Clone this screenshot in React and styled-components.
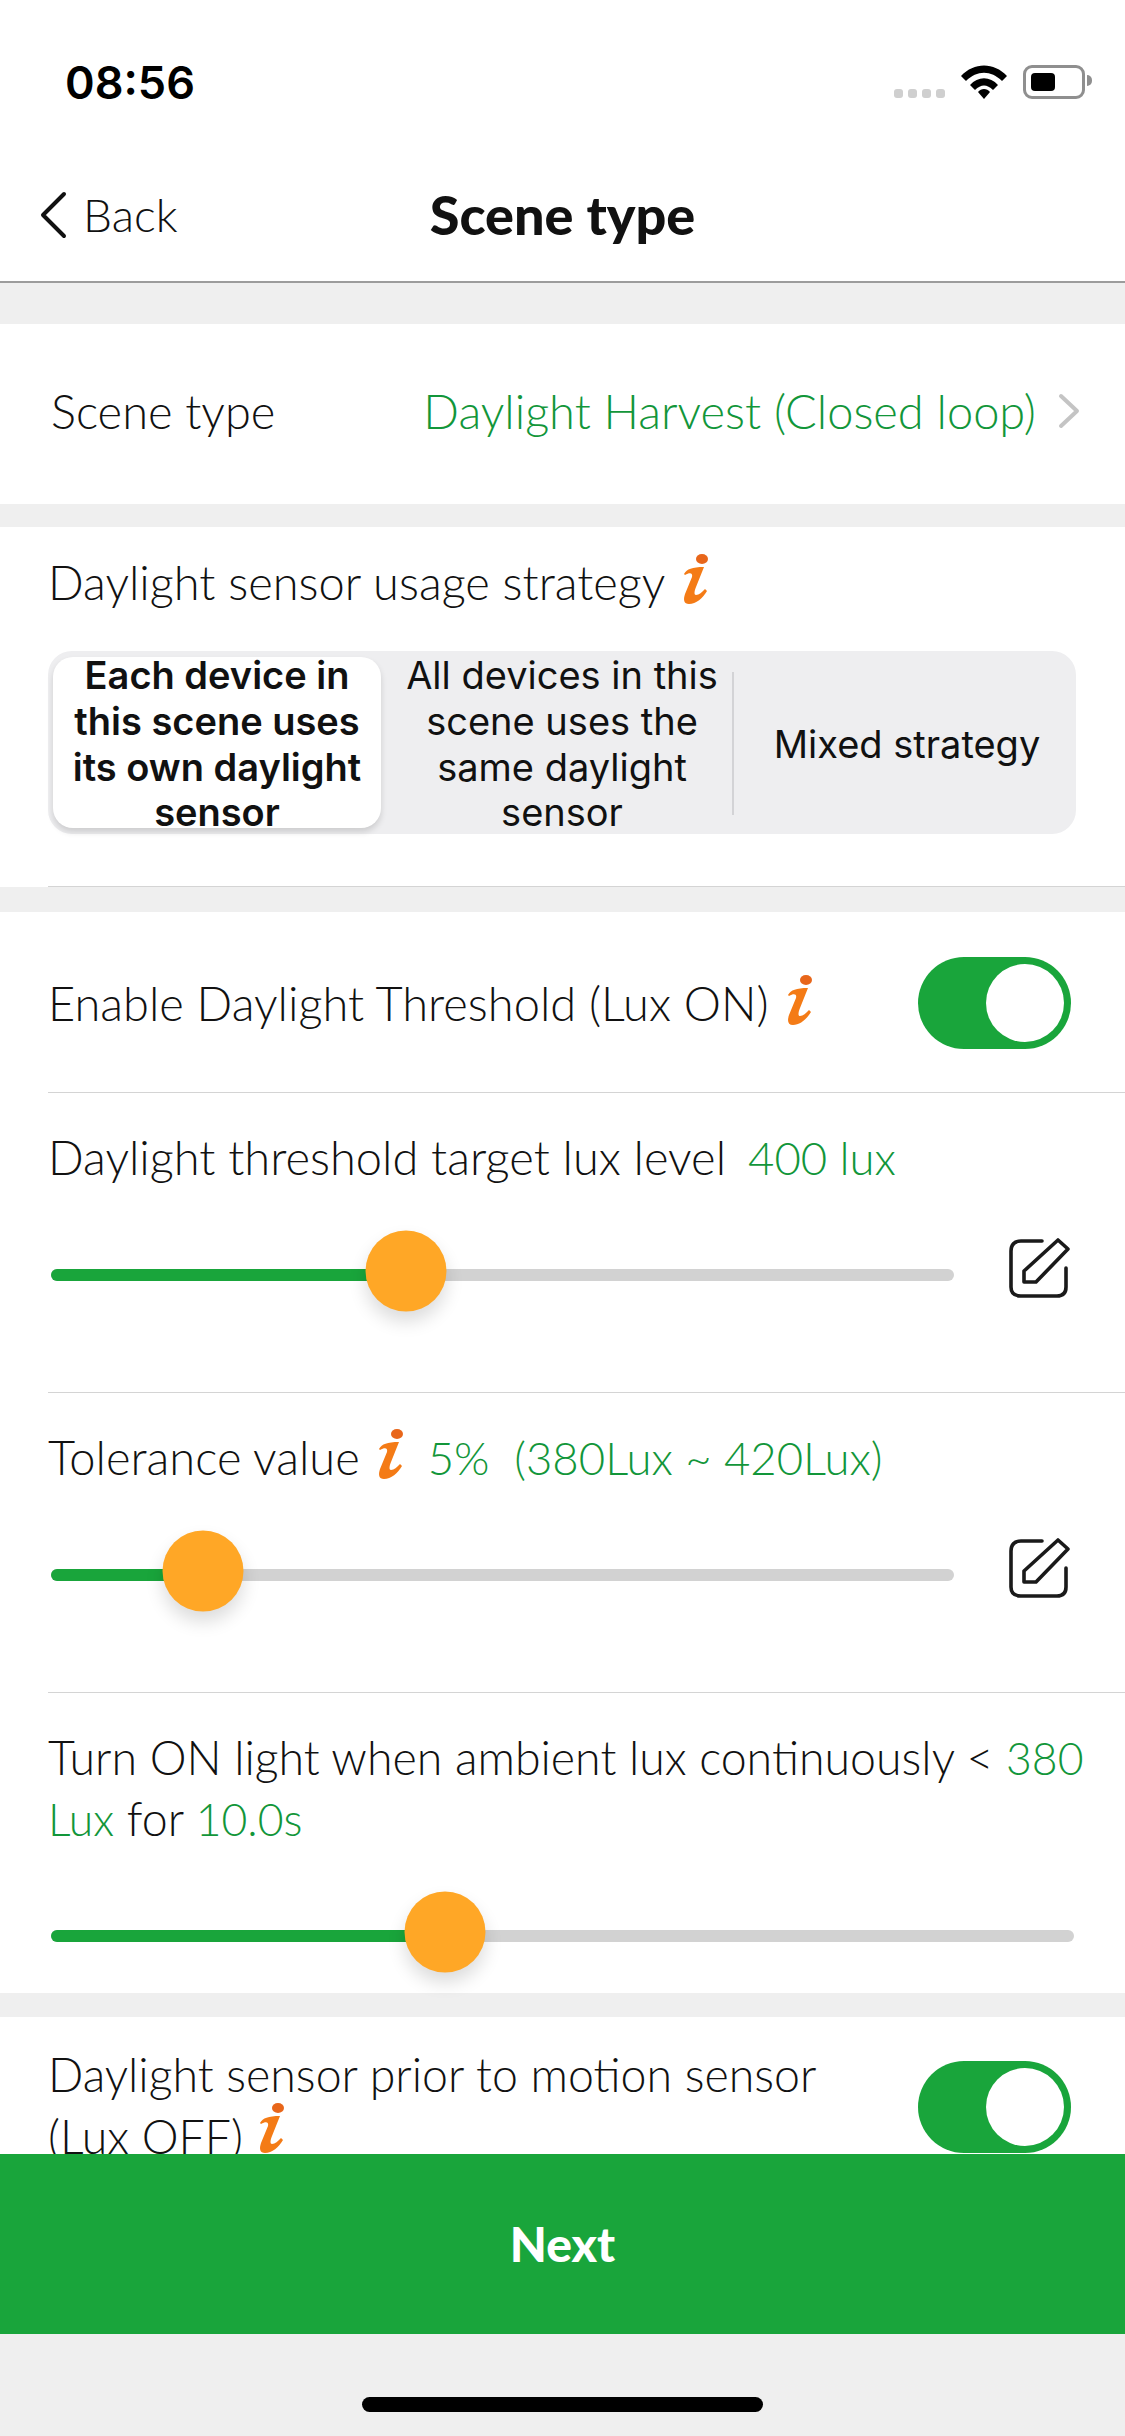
import React from "react";
import styled, { createGlobalStyle } from "styled-components";

const GREEN = "#19a53b";
const GREEN_TEXT = "#12963a";
const BODY_FONT = `"Lato", "Liberation Sans", sans-serif`;

const GlobalStyle = createGlobalStyle`
  html, body {
    margin: 0;
    padding: 0;
    background: #fff;
  }
  * {
    box-sizing: border-box;
  }
`;

const InfoIcon = () => (
  <InfoSvg viewBox="0 0 26 50">
    <ellipse cx="19" cy="5" rx="6" ry="5" fill="#e8661a" />
    <path
      d="M1 20 C4 15 9 13 21 13 L13 33 C11 38 11 41 13 41 C16 41 19 38 22 35 L24 37 C20 44 13 50 6 50 C1 50 0 46 2 40 L9 23 C10 19 7 18 2 21 Z"
      fill="#f47b16"
    />
  </InfoSvg>
);

const EditIcon = () => (
  <EditSvg viewBox="0 0 62 62" fill="none" stroke="#1a1a1a" strokeWidth="3.6" strokeLinejoin="round" strokeLinecap="round">
    <path d="M34 3 H13 C6 3 3 7 3 13 V49 C3 55 6 58 13 58 H49 C55 58 58 55 58 49 V30" />
    <path d="M50 2 L60 11 L28 44 H16 V33 Z" />
  </EditSvg>
);

const Slider = ({ value, width }) => (
  <Track $width={width}>
    <Fill style={{ width: `${value}%` }} />
    <Thumb style={{ left: `${value}%` }} />
  </Track>
);

const App = () => (
  <Page>
    <GlobalStyle />
    <Header>
      <StatusBar>
        <Time>08:56</Time>
        <StatusIcons>
          <Signal>
            <Dot />
            <Dot />
            <Dot />
            <Dot />
          </Signal>
          <svg width="46" height="34" viewBox="0 0 46 34">
            <path d="M0 11 C13 -3 33 -3 46 11 L41 16 C30 5 16 5 5 16 Z" fill="#000" />
            <path d="M9 20 C17 11 29 11 37 20 L32 25 C26 19 20 19 14 25 Z" fill="#000" />
            <path d="M17 27 C20 23 26 23 29 27 L23 34 Z" fill="#000" />
          </svg>
          <Battery>
            <BatteryLevel />
          </Battery>
        </StatusIcons>
      </StatusBar>
      <NavBar>
        <BackButton>
          <svg width="30" height="48" viewBox="0 0 30 48" fill="none" stroke="#111" strokeWidth="4" strokeLinecap="round" strokeLinejoin="round">
            <path d="M26 3 L5 24 L26 45" />
          </svg>
          <BackLabel>Back</BackLabel>
        </BackButton>
        <NavTitle>Scene type</NavTitle>
      </NavBar>
    </Header>

    <Content>
      <Gap $h={41} />
      <SceneRow>
        <RowLabel>Scene type</RowLabel>
        <SceneValue>
          <Green>Daylight Harvest (Closed loop)</Green>
          <svg width="22" height="36" viewBox="0 0 22 36" fill="none" stroke="#c4c4c4" strokeWidth="4" strokeLinecap="round" strokeLinejoin="round">
            <path d="M3 3 L19 18 L3 33" />
          </svg>
        </SceneValue>
      </SceneRow>
      <Gap $h={23} />

      <StrategyBlock>
        <TitleLine>
          Daylight sensor usage strategy
          <InfoIcon />
        </TitleLine>
        <Segmented>
          <Segment $active>
            Each device in
            <br />
            this scene uses
            <br />
            its own daylight
            <br />
            sensor
          </Segment>
          <Segment>
            All devices in this
            <br />
            scene uses the
            <br />
            same daylight
            <br />
            sensor
          </Segment>
          <SegmentDivider />
          <Segment>Mixed strategy</Segment>
        </Segmented>
      </StrategyBlock>
      <Gap $h={25} />

      <ToggleRow>
        <TitleLine>
          Enable Daylight Threshold (Lux ON)
          <InfoIcon />
        </TitleLine>
        <Toggle />
      </ToggleRow>

      <SliderBlock>
        <TitleLine $gap={22}>
          Daylight threshold target lux level
          <Green>400 lux</Green>
        </TitleLine>
        <SliderRow>
          <Slider value={39.3} width={903} />
          <EditIcon />
        </SliderRow>
      </SliderBlock>

      <SliderBlock>
        <TitleLine>
          Tolerance value
          <InfoIcon />
          <ToleranceValue>5%&nbsp; (380Lux ~ 420Lux)</ToleranceValue>
        </TitleLine>
        <SliderRow>
          <Slider value={16.8} width={903} />
          <EditIcon />
        </SliderRow>
      </SliderBlock>

      <TurnOnBlock>
        <Paragraph>
          Turn ON light when ambient lux continuously &lt;{" "}
          <Green>
            380
            <br />
            Lux
          </Green>{" "}
          for <Green>10.0s</Green>
        </Paragraph>
        <SliderRow $last>
          <Slider value={38.5} width={1023} />
        </SliderRow>
      </TurnOnBlock>
      <Gap $h={24} />

      <LastRow>
        <Paragraph>
          Daylight sensor prior to motion sensor
          <br />
          (Lux OFF) <InfoIcon />
        </Paragraph>
        <Toggle />
      </LastRow>
    </Content>

    <NextButton>Next</NextButton>
    <BottomArea>
      <HomeIndicator />
    </BottomArea>
  </Page>
);

export default App;

const Page = styled.div`
  display: flex;
  flex-direction: column;
  width: 1125px;
  height: 2436px;
  overflow: hidden;
  font-family: ${BODY_FONT};
  font-weight: 300;
  color: #111;
  background: #fff;
`;

const Header = styled.header`
  flex: none;
  height: 283px;
  background: #fff;
  border-bottom: 2px solid #9c9c9c;
`;

const StatusBar = styled.div`
  display: flex;
  align-items: flex-start;
  justify-content: space-between;
  height: 148px;
  padding: 59px 40px 0 65px;
`;

const Time = styled.div`
  font-family: "Inter", "Liberation Sans", sans-serif;
  font-size: 45px;
  line-height: 48px;
  font-weight: 600;
  color: #000;
`;

const StatusIcons = styled.div`
  display: flex;
  align-items: flex-start;
  gap: 16px;
  padding-top: 6px;
`;

const Signal = styled.div`
  display: flex;
  gap: 5px;
  margin-top: 24px;
`;

const Dot = styled.span`
  width: 9px;
  height: 9px;
  border-radius: 3px;
  background: #cfcfcf;
`;

const Battery = styled.div`
  position: relative;
  width: 62px;
  height: 34px;
  padding: 5px;
  border: 3px solid #8f8f8f;
  border-radius: 9px;

  &::after {
    content: "";
    position: absolute;
    top: 7px;
    right: -10px;
    width: 5px;
    height: 11px;
    border-radius: 0 6px 6px 0;
    background: #8f8f8f;
  }
`;

const BatteryLevel = styled.div`
  width: 24px;
  height: 100%;
  border-radius: 4px;
  background: #000;
`;

const NavBar = styled.nav`
  position: relative;
  display: flex;
  align-items: center;
  height: 133px;
  padding-left: 38px;
`;

const BackButton = styled.div`
  display: flex;
  align-items: center;
  gap: 15px;
`;

const BackLabel = styled.span`
  font-size: 46px;
  font-weight: 300;
  color: #111;
`;

const NavTitle = styled.h1`
  position: absolute;
  left: 0;
  right: 0;
  margin: 0;
  text-align: center;
  font-size: 54px;
  font-weight: 900;
  color: #111;
`;

const Content = styled.main`
  flex: 1;
  min-height: 0;
  overflow: hidden;
  background: #fff;
`;

const Gap = styled.div`
  height: ${(p) => p.$h}px;
  background: #efefef;
`;

const SceneRow = styled.div`
  display: flex;
  align-items: center;
  justify-content: space-between;
  height: 180px;
  padding: 0 45px 6px 51px;
`;

const RowLabel = styled.span`
  font-size: 47px;
`;

const SceneValue = styled.div`
  display: flex;
  align-items: center;
  gap: 22px;
  font-size: 47px;
`;

const Green = styled.span`
  color: ${GREEN_TEXT};
`;

const ToleranceValue = styled(Green)`
  margin-left: 6px;
`;

const TitleLine = styled.div`
  display: flex;
  align-items: center;
  gap: ${(p) => p.$gap || 18}px;
  height: 70px;
  font-size: 47px;

  ${Green} {
    font-size: 45.5px;
  }
`;

const InfoSvg = styled.svg`
  display: inline-block;
  flex: none;
  width: 26px;
  height: 50px;
  margin-bottom: 6px;
  vertical-align: -6px;
`;

const EditSvg = styled.svg`
  flex: none;
  width: 62px;
  height: 62px;
  margin-left: 54px;
  margin-top: -12px;
`;

const StrategyBlock = styled.section`
  position: relative;
  height: 360px;
  padding: 20px 48px 0;

  &::after {
    content: "";
    position: absolute;
    left: 48px;
    right: 0;
    bottom: 0;
    height: 1.5px;
    background: #d4d4d4;
  }
`;

const Segmented = styled.div`
  display: grid;
  grid-template-columns: 328px 362px 1fr;
  grid-template-rows: 171px;
  position: relative;
  width: 1028px;
  height: 183px;
  margin-top: 34px;
  padding: 6px 5px;
  border-radius: 24px;
  background: #eeeef0;
`;

const Segment = styled.div`
  display: flex;
  align-items: center;
  justify-content: center;
  min-height: 0;
  padding-top: 4px;
  text-align: center;
  font-family: "Inter", "Liberation Sans", sans-serif;
  font-size: 38px;
  line-height: 45.6px;
  font-weight: ${(p) => (p.$active ? 600 : 400)};
  color: #111;
  ${(p) =>
    p.$active &&
    `
    background: #fff;
    border-radius: 20px;
    box-shadow: 0 4px 6px rgba(0, 0, 0, 0.14);
  `}
`;

const SegmentDivider = styled.span`
  position: absolute;
  left: 684px;
  top: 21px;
  bottom: 19px;
  width: 2px;
  background: #d3d3d6;
`;

const ToggleRow = styled.section`
  position: relative;
  display: flex;
  align-items: center;
  justify-content: space-between;
  height: 181px;
  padding: 0 54px 0 48px;

  &::after {
    content: "";
    position: absolute;
    left: 48px;
    right: 0;
    bottom: 0;
    height: 1.5px;
    background: #d4d4d4;
  }
`;

const Toggle = styled.div`
  position: relative;
  flex: none;
  width: 153px;
  height: 92px;
  border-radius: 46px;
  background: ${GREEN};

  &::after {
    content: "";
    position: absolute;
    top: 7px;
    right: 7px;
    width: 78px;
    height: 78px;
    border-radius: 50%;
    background: #fff;
  }
`;

const SliderBlock = styled.section`
  position: relative;
  height: 300px;
  padding: 29px 0 0 48px;

  &::after {
    content: "";
    position: absolute;
    left: 48px;
    right: 0;
    bottom: 0;
    height: 1.5px;
    background: #d4d4d4;
  }
`;

const SliderRow = styled.div`
  display: flex;
  align-items: center;
  height: 81px;
  margin-top: ${(p) => (p.$last ? "46px" : "42px")};
  padding-left: 3px;
`;

const Track = styled.div`
  position: relative;
  flex: none;
  width: ${(p) => p.$width}px;
  height: 12px;
  border-radius: 6px;
  background: #d2d2d2;
`;

const Fill = styled.div`
  height: 100%;
  border-radius: 6px 0 0 6px;
  background: ${GREEN};
`;

const Thumb = styled.div`
  position: absolute;
  top: calc(50% - 4px);
  width: 81px;
  height: 81px;
  border-radius: 50%;
  background: #ffa726;
  transform: translate(-50%, -50%);
  box-shadow: 0 10px 18px rgba(0, 0, 0, 0.14);
`;

const TurnOnBlock = styled.section`
  height: 300px;
  padding: 34px 0 0 48px;
`;

const Paragraph = styled.div`
  font-size: 46.5px;
  line-height: 61px;

  ${Green} {
    font-size: 44.5px;
  }

  ${InfoSvg} {
    margin-left: 3px;
    margin-bottom: 14px;
  }
`;

const LastRow = styled.section`
  display: flex;
  align-items: flex-start;
  justify-content: space-between;
  padding: 29px 54px 0 48px;

  ${Paragraph} {
    line-height: 57px;
  }

  ${InfoSvg} {
    margin-bottom: 7px;
  }

  ${Toggle} {
    margin-top: 15px;
  }
`;

const NextButton = styled.div`
  flex: none;
  display: flex;
  align-items: center;
  justify-content: center;
  height: 180px;
  padding-bottom: 2px;
  font-size: 48px;
  font-weight: 900;
  color: #fff;
  background: ${GREEN};
`;

const BottomArea = styled.div`
  flex: none;
  display: flex;
  justify-content: center;
  height: 102px;
  padding-top: 63px;
  background: #efefef;
`;

const HomeIndicator = styled.div`
  width: 401px;
  height: 15px;
  border-radius: 8px;
  background: #000;
`;
